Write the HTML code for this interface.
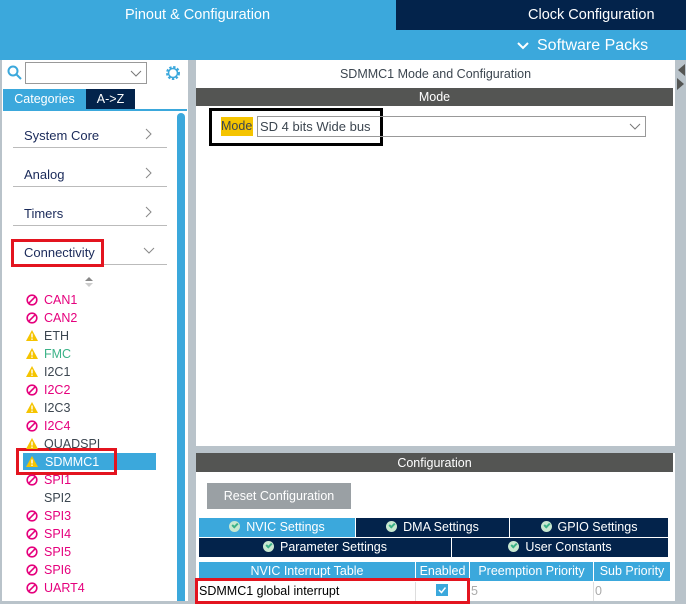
<!DOCTYPE html><html><head><style>
*{margin:0;padding:0;box-sizing:border-box}
body{width:686px;height:601px;overflow:hidden;background:#b9c3ca;font-family:"Liberation Sans",sans-serif;position:relative}
.a{position:absolute}
.t{font-size:13px;color:#1a2a5a}
.it{position:absolute;left:26px;font-size:12.5px;height:18px;line-height:18px}
.mg{color:#e5007d}.dk{color:#3c4650}.gr{color:#3bb287}
.ic{position:absolute;left:0;top:3px;width:12px;height:12px}
.it span{position:absolute;left:18px}
.hd{background:#545553;color:#fff;font-size:12.5px;text-align:center}
.tab{position:absolute;height:19px;line-height:19px;color:#fff;font-size:12.5px;text-align:center;background:#03234b}
.ck{display:inline-block;width:11px;height:11px;border-radius:50%;background:#c8e8d0;vertical-align:-1px;margin-right:6px;position:relative}
.ck:after{content:"";position:absolute;left:3px;top:2px;width:4px;height:2px;border-left:2px solid #3bb287;border-bottom:2px solid #3bb287;transform:rotate(-45deg)}
.th{position:absolute;top:562px;height:19px;line-height:19px;background:#3ba8dc;color:#fff;font-size:12.5px;text-align:center}
</style></head><body>
<div class="a" style="left:0;top:0;width:686px;height:60px;background:#3ba8dc"></div>
<div class="a" style="left:0;top:0;width:395px;height:30px;color:#fff;font-size:14.5px;text-align:center;line-height:31px">Pinout &amp; Configuration</div>
<div class="a" style="left:396px;top:0;width:290px;height:30px;background:#03234b;color:#fff;font-size:14.5px;line-height:31px;padding-left:132px">Clock Configuration</div>
<svg class="a" style="left:517px;top:42px" width="12" height="8"><path d="M1 1L6 6L11 1" stroke="#fff" stroke-width="2" fill="none"/></svg>
<div class="a" style="left:537px;top:37px;color:#fff;font-size:16px">Software Packs</div>
<!-- left -->
<div class="a" style="left:2px;top:60px;width:186px;height:541px;background:#fff"></div>
<svg class="a" style="left:7px;top:65px" width="16" height="16"><circle cx="6" cy="6" r="4.5" fill="none" stroke="#3ba8dc" stroke-width="2"/><line x1="9" y1="9" x2="14" y2="14" stroke="#3ba8dc" stroke-width="2"/></svg>
<div class="a" style="left:25px;top:62px;width:122px;height:22px;border:1px solid #999"></div>
<svg class="a" style="left:130px;top:70px" width="12" height="8"><path d="M1 1L6 6L11 1" stroke="#777" fill="none"/></svg>
<svg class="a" style="left:164px;top:64px" width="18" height="18"><circle cx="9" cy="9" r="5.5" fill="none" stroke="#3ba8dc" stroke-width="3" stroke-dasharray="2.2 1.5"/><circle cx="9" cy="9" r="4.5" fill="none" stroke="#3ba8dc" stroke-width="1.5"/></svg>
<div class="a" style="left:3px;top:89px;width:83px;height:20px;background:#3ba8dc;color:#fff;font-size:12.5px;text-align:center;line-height:20px">Categories</div>
<div class="a" style="left:86px;top:89px;width:49px;height:20px;background:#03234b;color:#fff;font-size:12.5px;text-align:center;line-height:20px">A-&gt;Z</div>
<div class="a" style="left:3px;top:109px;width:184px;height:2px;background:#3ba8dc"></div>
<div class="a" style="left:177px;top:113px;width:8px;height:488px;background:#3ba8dc;border-radius:4px 4px 0 0"></div>
<div class="a t" style="left:24px;top:128px">System Core</div><div class="a" style="left:13px;top:147px;width:154px;height:1px;background:#bbb"></div>
<svg class="a" style="left:145px;top:128px" width="8" height="12"><path d="M1 1L6 6L1 11" stroke="#888" fill="none"/></svg>
<div class="a t" style="left:24px;top:167px">Analog</div><div class="a" style="left:13px;top:186px;width:154px;height:1px;background:#bbb"></div>
<svg class="a" style="left:145px;top:167px" width="8" height="12"><path d="M1 1L6 6L1 11" stroke="#888" fill="none"/></svg>
<div class="a t" style="left:24px;top:206px">Timers</div><div class="a" style="left:13px;top:225px;width:154px;height:1px;background:#bbb"></div>
<svg class="a" style="left:145px;top:206px" width="8" height="12"><path d="M1 1L6 6L1 11" stroke="#888" fill="none"/></svg>
<div class="a t" style="left:24px;top:245px">Connectivity</div><div class="a" style="left:13px;top:264px;width:154px;height:1px;background:#bbb"></div>
<svg class="a" style="left:143px;top:247px" width="12" height="8"><path d="M1 1L6 6L11 1" stroke="#888" fill="none"/></svg>
<div class="a" style="left:11px;top:239px;width:93px;height:28px;border:3px solid #e3141f"></div>
<svg class="a" style="left:85px;top:277px" width="8" height="10"><path d="M0 4L4 0L8 4Z" fill="#888"/><path d="M0 6L4 10L8 6Z" fill="#ccc"/></svg>
<div class="a" style="left:23px;top:453px;width:133px;height:17px;background:#3ba8dc"></div>
<div class="a" style="left:16px;top:448px;width:101px;height:27px;border:3px solid #e3141f"></div>
<div style="position:absolute;left:0;top:291px">
<div class="it mg" style="top:0"><svg class="ic"><circle cx="6" cy="6" r="4.8" fill="none" stroke="#e5007d" stroke-width="1.6"/><line x1="2.6" y1="9.4" x2="9.4" y2="2.6" stroke="#e5007d" stroke-width="1.6"/></svg><span>CAN1</span></div>
<div class="it mg" style="top:18px"><svg class="ic"><circle cx="6" cy="6" r="4.8" fill="none" stroke="#e5007d" stroke-width="1.6"/><line x1="2.6" y1="9.4" x2="9.4" y2="2.6" stroke="#e5007d" stroke-width="1.6"/></svg><span>CAN2</span></div>
<div class="it dk" style="top:36px"><svg class="ic"><path d="M6 0L12 11H0Z" fill="#f5c400"/><rect x="5.3" y="3.5" width="1.4" height="4" fill="#fff"/><rect x="5.3" y="8.5" width="1.4" height="1.4" fill="#fff"/></svg><span>ETH</span></div>
<div class="it gr" style="top:54px"><svg class="ic"><path d="M6 0L12 11H0Z" fill="#f5c400"/><rect x="5.3" y="3.5" width="1.4" height="4" fill="#fff"/><rect x="5.3" y="8.5" width="1.4" height="1.4" fill="#fff"/></svg><span>FMC</span></div>
<div class="it dk" style="top:72px"><svg class="ic"><path d="M6 0L12 11H0Z" fill="#f5c400"/><rect x="5.3" y="3.5" width="1.4" height="4" fill="#fff"/><rect x="5.3" y="8.5" width="1.4" height="1.4" fill="#fff"/></svg><span>I2C1</span></div>
<div class="it mg" style="top:90px"><svg class="ic"><circle cx="6" cy="6" r="4.8" fill="none" stroke="#e5007d" stroke-width="1.6"/><line x1="2.6" y1="9.4" x2="9.4" y2="2.6" stroke="#e5007d" stroke-width="1.6"/></svg><span>I2C2</span></div>
<div class="it dk" style="top:108px"><svg class="ic"><path d="M6 0L12 11H0Z" fill="#f5c400"/><rect x="5.3" y="3.5" width="1.4" height="4" fill="#fff"/><rect x="5.3" y="8.5" width="1.4" height="1.4" fill="#fff"/></svg><span>I2C3</span></div>
<div class="it mg" style="top:126px"><svg class="ic"><circle cx="6" cy="6" r="4.8" fill="none" stroke="#e5007d" stroke-width="1.6"/><line x1="2.6" y1="9.4" x2="9.4" y2="2.6" stroke="#e5007d" stroke-width="1.6"/></svg><span>I2C4</span></div>
<div class="it dk" style="top:144px"><svg class="ic"><path d="M6 0L12 11H0Z" fill="#f5c400"/><rect x="5.3" y="3.5" width="1.4" height="4" fill="#fff"/><rect x="5.3" y="8.5" width="1.4" height="1.4" fill="#fff"/></svg><span>QUADSPI</span></div>
<div class="it" style="top:162px;color:#fff"><svg class="ic"><path d="M6 0L12 11H0Z" fill="#f5c400"/><rect x="5.3" y="3.5" width="1.4" height="4" fill="#fff"/><rect x="5.3" y="8.5" width="1.4" height="1.4" fill="#fff"/></svg><span style="left:19px">SDMMC1</span></div>
<div class="it mg" style="top:180px"><svg class="ic"><circle cx="6" cy="6" r="4.8" fill="none" stroke="#e5007d" stroke-width="1.6"/><line x1="2.6" y1="9.4" x2="9.4" y2="2.6" stroke="#e5007d" stroke-width="1.6"/></svg><span>SPI1</span></div>
<div class="it dk" style="top:198px"><span>SPI2</span></div>
<div class="it mg" style="top:216px"><svg class="ic"><circle cx="6" cy="6" r="4.8" fill="none" stroke="#e5007d" stroke-width="1.6"/><line x1="2.6" y1="9.4" x2="9.4" y2="2.6" stroke="#e5007d" stroke-width="1.6"/></svg><span>SPI3</span></div>
<div class="it mg" style="top:234px"><svg class="ic"><circle cx="6" cy="6" r="4.8" fill="none" stroke="#e5007d" stroke-width="1.6"/><line x1="2.6" y1="9.4" x2="9.4" y2="2.6" stroke="#e5007d" stroke-width="1.6"/></svg><span>SPI4</span></div>
<div class="it mg" style="top:252px"><svg class="ic"><circle cx="6" cy="6" r="4.8" fill="none" stroke="#e5007d" stroke-width="1.6"/><line x1="2.6" y1="9.4" x2="9.4" y2="2.6" stroke="#e5007d" stroke-width="1.6"/></svg><span>SPI5</span></div>
<div class="it mg" style="top:270px"><svg class="ic"><circle cx="6" cy="6" r="4.8" fill="none" stroke="#e5007d" stroke-width="1.6"/><line x1="2.6" y1="9.4" x2="9.4" y2="2.6" stroke="#e5007d" stroke-width="1.6"/></svg><span>SPI6</span></div>
<div class="it mg" style="top:288px"><svg class="ic"><circle cx="6" cy="6" r="4.8" fill="none" stroke="#e5007d" stroke-width="1.6"/><line x1="2.6" y1="9.4" x2="9.4" y2="2.6" stroke="#e5007d" stroke-width="1.6"/></svg><span>UART4</span></div>
</div>
<!-- right -->
<div class="a" style="left:196px;top:60px;width:479px;height:386px;background:#fff"></div>
<svg class="a" style="left:676px;top:62px" width="10" height="30"><path d="M9 2L2 8L9 14Z" fill="#545553"/><path d="M1 16L8 22L1 28Z" fill="#545553"/></svg>
<div class="a" style="left:196px;top:67px;width:479px;text-align:center;font-size:12.5px;color:#3c4650">SDMMC1 Mode and Configuration</div>
<div class="a hd" style="left:196px;top:88px;width:477px;height:18px;line-height:18px">Mode</div>
<div class="a" style="left:209px;top:108px;width:174px;height:38px;border:3px solid #000"></div>
<div class="a" style="left:221px;top:117px;width:32px;height:19px;background:#f5c400;font-size:12.5px;line-height:19px;color:#3c4650">Mode</div>
<div class="a" style="left:257px;top:116px;width:389px;height:21px;border:1px solid #999;font-size:13px;line-height:19px;padding-left:2px;color:#3c4650">SD 4 bits Wide bus</div>
<svg class="a" style="left:629px;top:123px" width="12" height="8"><path d="M1 1L6 6L11 1" stroke="#777" fill="none"/></svg>
<div class="a" style="left:196px;top:453px;width:479px;height:148px;background:#fff"></div>
<div class="a hd" style="left:196px;top:453px;width:477px;height:19px;line-height:20px">Configuration</div>
<div class="a" style="left:207px;top:483px;width:144px;height:26px;background:#9aa0a4;color:#fff;font-size:12.5px;line-height:26px;text-align:center">Reset Configuration</div>
<div class="tab" style="left:199px;top:518px;width:156px;background:#3ba8dc"><i class="ck"></i>NVIC Settings</div>
<div class="tab" style="left:356px;top:518px;width:153px"><i class="ck"></i>DMA Settings</div>
<div class="tab" style="left:510px;top:518px;width:158px"><i class="ck"></i>GPIO Settings</div>
<div class="tab" style="left:199px;top:538px;width:252px"><i class="ck"></i>Parameter Settings</div>
<div class="tab" style="left:452px;top:538px;width:216px"><i class="ck"></i>User Constants</div>
<div class="th" style="left:199px;width:216px">NVIC Interrupt Table</div>
<div class="th" style="left:416px;width:53px">Enabled</div>
<div class="th" style="left:470px;width:123px">Preemption Priority</div>
<div class="th" style="left:594px;width:76px">Sub Priority</div>
<div class="a" style="left:199px;top:584px;font-size:12.5px;color:#000">SDMMC1 global interrupt</div>
<div class="a" style="left:436px;top:584px;width:12px;height:12px;background:#3ba8dc"></div>
<svg class="a" style="left:436px;top:584px" width="12" height="12"><path d="M3 6L5.5 8.5L9.5 3.5" stroke="#fff" stroke-width="1.5" fill="none"/></svg>
<div class="a" style="left:471px;top:584px;font-size:12.5px;color:#aaa">5</div>
<div class="a" style="left:595px;top:584px;font-size:12.5px;color:#aaa">0</div>
<div class="a" style="left:415px;top:582px;width:1px;height:19px;background:#ddd"></div>
<div class="a" style="left:593px;top:582px;width:1px;height:19px;background:#ddd"></div>
<div class="a" style="left:195px;top:578px;width:275px;height:26px;border:3px solid #e3141f"></div>
</body></html>
